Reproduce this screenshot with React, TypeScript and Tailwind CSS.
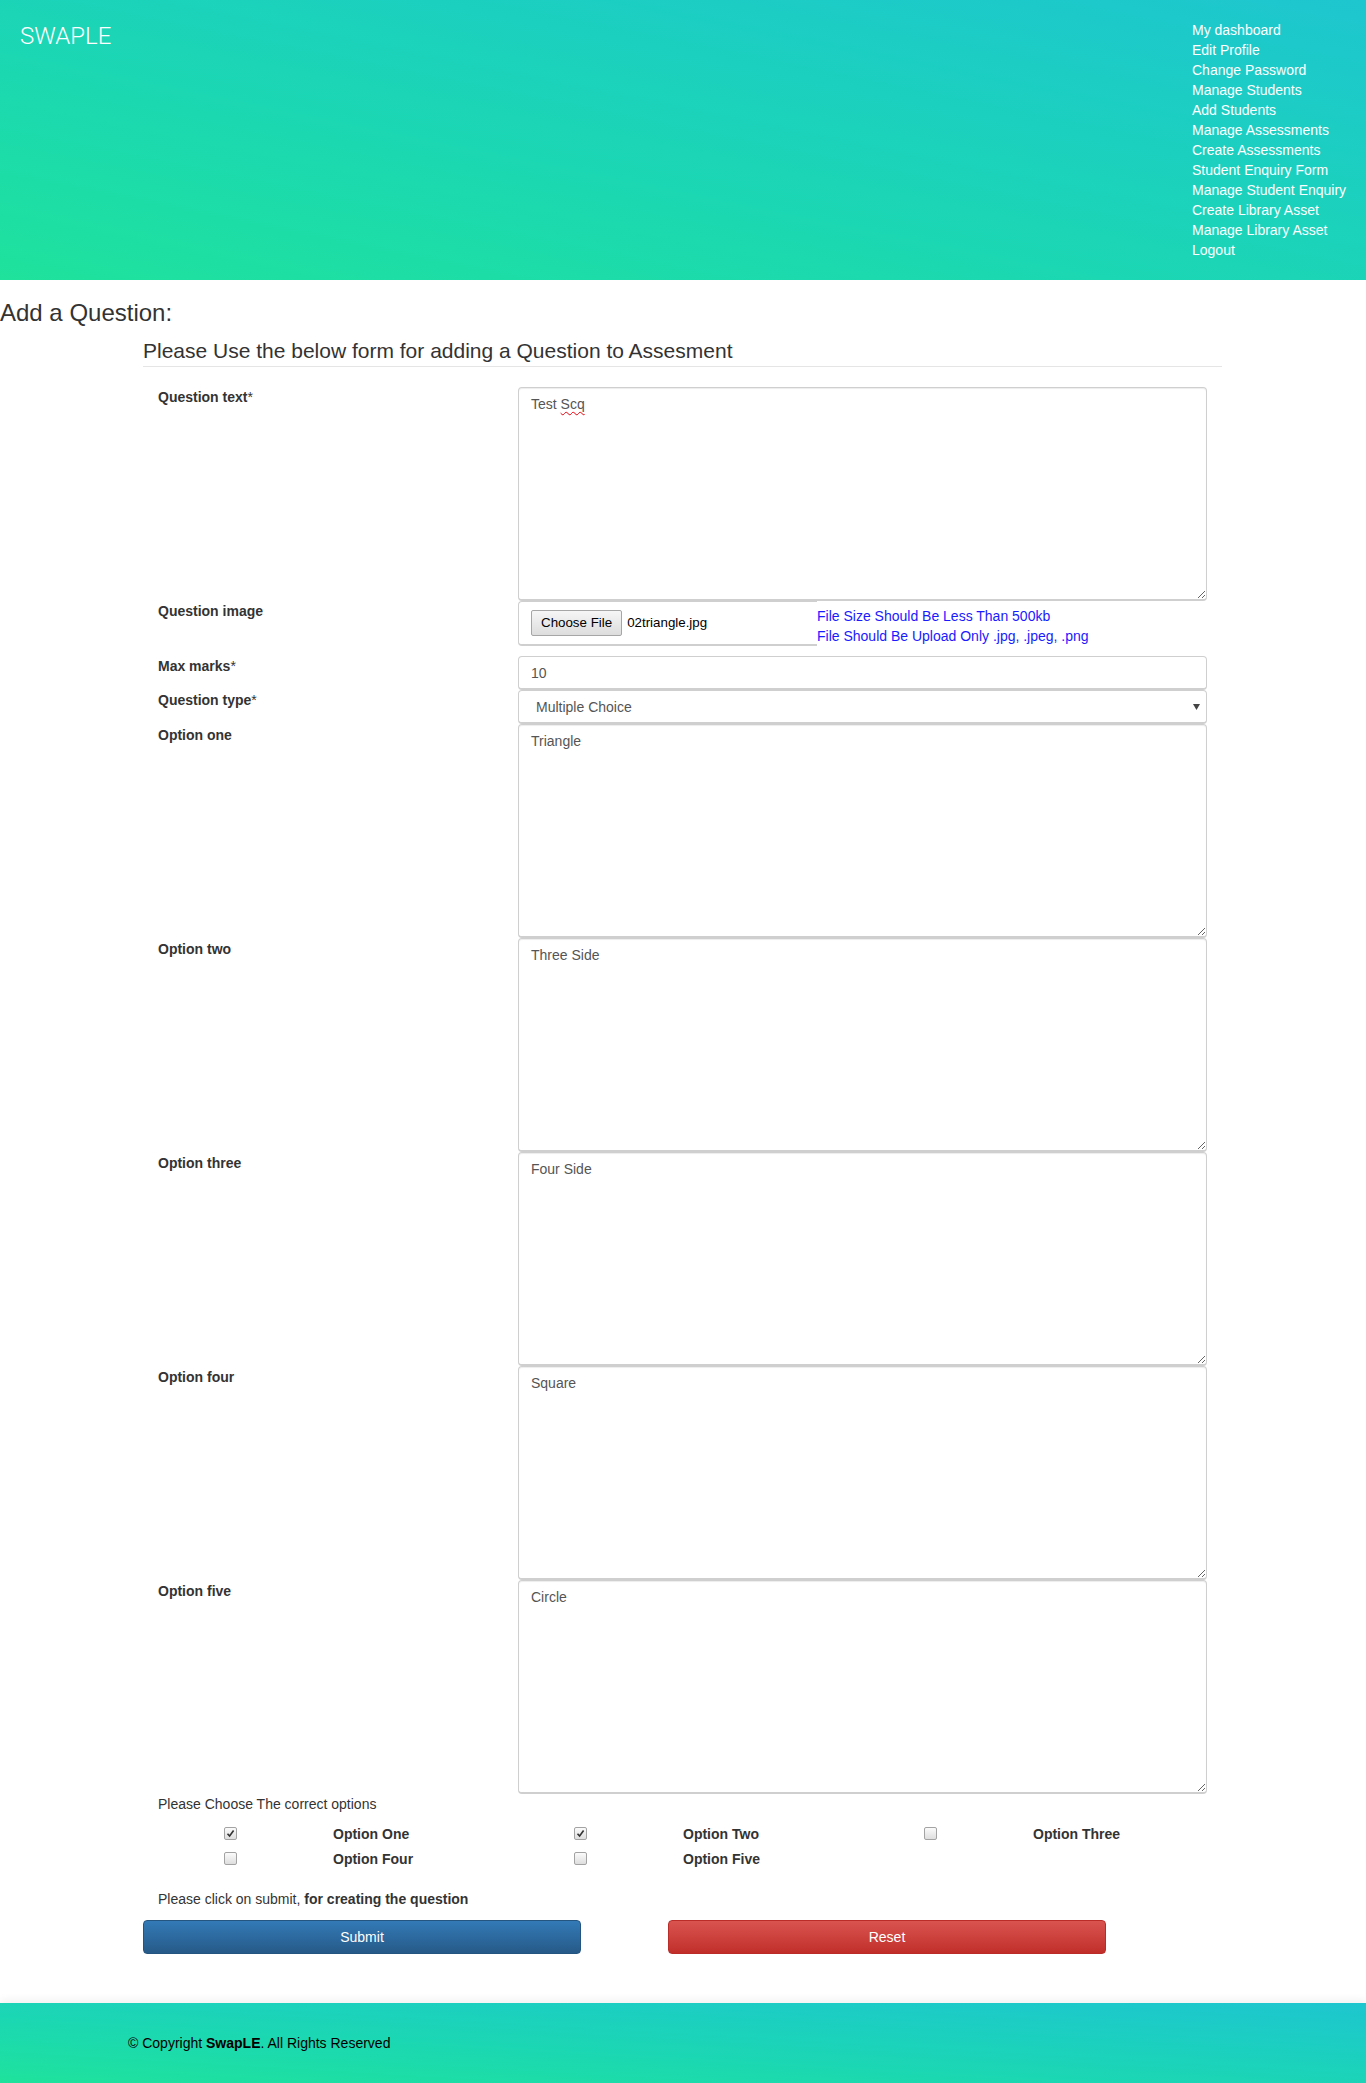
import React from "react";

const navLinks = [
  "My dashboard",
  "Edit Profile",
  "Change Password",
  "Manage Students",
  "Add Students",
  "Manage Assessments",
  "Create Assessments",
  "Student Enquiry Form",
  "Manage Student Enquiry",
  "Create Library Asset",
  "Manage Library Asset",
  "Logout",
];

const optionAreas = [
  { label: "Option one", value: "Triangle" },
  { label: "Option two", value: "Three Side" },
  { label: "Option three", value: "Four Side" },
  { label: "Option four", value: "Square" },
  { label: "Option five", value: "Circle" },
];

const correctOptions = [
  { label: "Option One", checked: true },
  { label: "Option Two", checked: true },
  { label: "Option Three", checked: false },
  { label: "Option Four", checked: false },
  { label: "Option Five", checked: false },
];

function Label({ text, required }: { text: string; required?: boolean }) {
  return (
    <div className="w-[360px] shrink-0 font-bold text-[#333]">
      {text}
      {required && <span className="font-normal">*</span>}
    </div>
  );
}

function TextBox({ children }: { children: React.ReactNode }) {
  return (
    <div className="h-[214px] w-[690px] overflow-auto resize-y rounded-[4px] border border-b-2 border-[#cfcfcf] bg-white px-[12px] py-[6px] text-[#555] shadow-[inset_0_1px_1px_rgba(0,0,0,0.075)]">
      {children}
    </div>
  );
}

function Checkbox({ checked }: { checked: boolean }) {
  return (
    <span className="flex h-[13px] w-[13px] items-center justify-center rounded-[2px] border border-[#a3a3a3] bg-linear-to-b from-[#fbfbfb] to-[#dedede]">
      {checked && (
        <svg width="9" height="9" viewBox="0 0 9 9">
          <path d="M1.5 4.8 L3.6 7 L7.6 1.5" fill="none" stroke="#333" strokeWidth="1.6" />
        </svg>
      )}
    </span>
  );
}

export default function App() {
  return (
    <div className="min-h-[2083px] bg-white font-['Liberation_Sans',Arial,sans-serif] text-[14px] leading-[20px] text-[#333]">
      {/* Header */}
      <header className="flex h-[280px] justify-between bg-linear-to-tr from-[#1fe29c] to-[#1ec6cf]">
        <div className="pl-[20px] pt-[22px] font-['Roboto',sans-serif] text-[24px] font-light leading-[28px] text-white">
          SWAPLE
        </div>
        <ul className="w-[174px] pt-[20px]">
          {navLinks.map((link) => (
            <li key={link} className="leading-[20px] text-white">
              {link}
            </li>
          ))}
        </ul>
      </header>

      <h3 className="mb-[10px] mt-[20px] text-[24px] leading-[26.4px]">Add a Question:</h3>

      <div className="ml-[143px] w-[1079px]">
        <div className="mb-[20px] border-b border-[#e5e5e5] text-[21px] leading-[30px]">
          Please Use the below form for adding a Question to Assesment
        </div>

        <div className="px-[15px]">
          <div className="flex">
            <Label text="Question text" required />
            <TextBox>
              Test <span className="underline decoration-red-600 decoration-wavy decoration-1 underline-offset-2">Scq</span>
            </TextBox>
          </div>

          <div className="mb-[10px] flex">
            <Label text="Question image" />
            <div className="flex">
              <div className="flex h-[45px] w-[299px] items-center rounded-l-[4px] border border-b-2 border-r-0 border-[#cfcfcf] pl-[12px]">
                <span className="flex h-[26px] items-center rounded-[2px] border border-[#a6a6a6] bg-linear-to-b from-[#f6f6f6] to-[#dddddd] px-[9px] text-[13.33px] text-black">
                  Choose File
                </span>
                <span className="ml-[5px] text-[13.33px] text-black">02triangle.jpg</span>
              </div>
              <div className="pt-[5px] text-[#1a1aff]">
                <div>File Size Should Be Less Than 500kb</div>
                <div>File Should Be Upload Only .jpg, .jpeg, .png</div>
              </div>
            </div>
          </div>

          <div className="flex">
            <Label text="Max marks" required />
            <div className="flex h-[34px] w-[690px] items-center rounded-[4px] border border-b-2 border-[#cfcfcf] px-[12px] text-[#555]">
              10
            </div>
          </div>

          <div className="flex">
            <Label text="Question type" required />
            <div className="flex h-[34px] w-[690px] items-center justify-between rounded-[4px] border border-b-2 border-[#cfcfcf] pl-[17px] pr-[6px] text-[#555]">
              <span>Multiple Choice</span>
              <svg width="7" height="6" viewBox="0 0 7 6">
                <path d="M0 0 H7 L3.5 6 Z" fill="#444" />
              </svg>
            </div>
          </div>

          {optionAreas.map((opt) => (
            <div key={opt.label} className="flex">
              <div className="pt-[1px]">
                <Label text={opt.label} />
              </div>
              <TextBox>{opt.value}</TextBox>
            </div>
          ))}

          <div>Please Choose The correct options</div>
        </div>

        <div className="mt-[7px] grid grid-cols-[350px_350px_350px]">
          {correctOptions.map((opt) => (
            <div key={opt.label} className="flex h-[25px] items-center pl-[81px]">
              <Checkbox checked={opt.checked} />
              <span className="ml-[96px] font-bold">{opt.label}</span>
            </div>
          ))}
        </div>

        <div className="mt-[18px] px-[15px]">
          Please click on submit, <b>for creating the question</b>
        </div>

        <div className="mt-[11px] flex gap-[87px]">
          <button
            type="button"
            className="h-[34px] w-[438px] rounded-[4px] border border-[#245580] bg-linear-to-b from-[#337ab7] to-[#265a88] text-white"
          >
            Submit
          </button>
          <button
            type="button"
            className="h-[34px] w-[438px] rounded-[4px] border border-[#b92c28] bg-linear-to-b from-[#d9534f] to-[#c12e2a] text-white"
          >
            Reset
          </button>
        </div>
      </div>

      {/* Footer */}
      <footer className="mt-[49px] flex h-[80px] items-center bg-linear-to-tr from-[#1fe29c] to-[#1ec6cf] pl-[128px] text-black shadow-[0_-3px_8px_rgba(0,0,0,0.06)]">
        © Copyright&nbsp;<b>SwapLE</b>. All Rights Reserved
      </footer>
    </div>
  );
}
